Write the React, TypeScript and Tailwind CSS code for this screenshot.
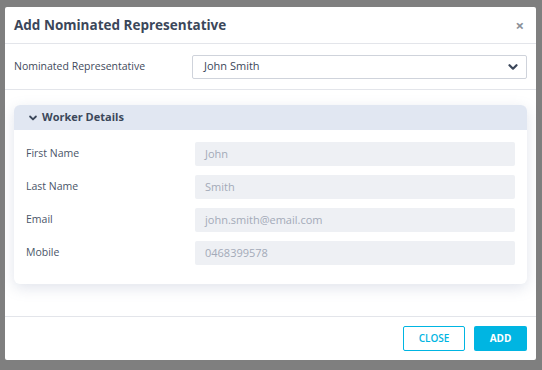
import * as React from "react";

// Modal "Add Nominated Representative" sobre fondo gris.
const fields = [
  { label: "First Name", value: "John" },
  { label: "Last Name", value: "Smith" },
  { label: "Email", value: "john.smith@email.com" },
  { label: "Mobile", value: "0468399578" },
];

function ChevronDown({ className }: { className?: string }) {
  return (
    <svg viewBox="0 0 12 12" className={className} fill="none" stroke="currentColor" strokeWidth="2.2" strokeLinecap="round" strokeLinejoin="round">
      <path d="M2.5 4.2 6 7.7l3.5-3.5" />
    </svg>
  );
}

export default function App() {
  return (
    <div
      className="h-[370px] w-[542px] bg-[#7f7f7f] pt-[7px] pl-[5px]"
      style={{ fontFamily: '"Open Sans", "Liberation Sans", sans-serif' }}
    >
      <div className="flex h-[353px] w-[531px] flex-col rounded-[2px] bg-white">
        <div className="flex h-[37px] items-center justify-between border-b border-[#e3e5ea] pl-[9px] pr-[12px]">
          <h1 className="text-[13.5px] font-bold text-[#3b475a]">Add Nominated Representative</h1>
          <span className="text-[15px] leading-none font-bold text-[#8a8f99]">×</span>
        </div>
        <div className="flex h-[46px] items-center border-b border-[#e3e5ea] pl-[9px] pr-[9px]">
          <span className="w-[178px] text-[10.5px] text-[#3f4a5c]">Nominated Representative</span>
          <div className="flex h-[24px] flex-1 items-center justify-between rounded-[2px] border border-[#cfd3db] pl-[11px] pr-[7px]">
            <span className="text-[11px] text-[#3b475a]">John Smith</span>
            <ChevronDown className="h-[12px] w-[12px] text-[#3b475a]" />
          </div>
        </div>
        <div className="flex-1 px-[9px] pt-[15px]">
          <div className="overflow-hidden rounded-[6px] bg-white shadow-[0_4px_14px_rgba(120,130,170,0.22)]">
            <div className="flex h-[25px] items-center gap-[4px] bg-[#e1e7f2] pl-[14px]">
              <ChevronDown className="h-[10px] w-[10px] text-[#3b475a]" />
              <span className="text-[11px] font-bold text-[#3b475a]">Worker Details</span>
            </div>
            <div className="flex flex-col gap-[9px] pt-[12px] pb-[19px] pr-[12px] pl-[12px]">
              {fields.map((f) => (
                <div key={f.label} className="flex items-center">
                  <span className="w-[169px] text-[10.5px] text-[#4a5568]">{f.label}</span>
                  <div className="flex h-[24px] flex-1 items-center rounded-[2px] bg-[#eef0f4] pl-[10px]">
                    <span className="text-[11px] text-[#a3aab8]">{f.value}</span>
                  </div>
                </div>
              ))}
            </div>
          </div>
        </div>
        <div className="flex h-[44px] items-center justify-end gap-[9px] border-t border-[#e3e5ea] pr-[9px]">
          <button className="h-[25px] w-[62px] rounded-[2px] border border-[#00b5e2] text-[10px] font-semibold text-[#00b5e2]">
            CLOSE
          </button>
          <button className="h-[25px] w-[53px] rounded-[2px] bg-[#00b5e2] text-[10px] font-bold text-white">
            ADD
          </button>
        </div>
      </div>
    </div>
  );
}
